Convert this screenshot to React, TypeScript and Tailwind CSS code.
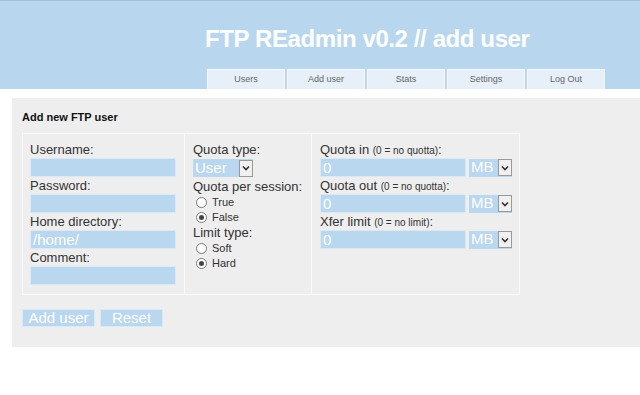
import React from "react";

const tabs = ["Users", "Add user", "Stats", "Settings", "Log Out"];

function Radio({ label, checked }: { label: string; checked?: boolean }) {
  return (
    <div className="flex h-[15px] items-center gap-[5px] pl-[3px] text-[11px] text-[#333]">
      <span className="flex h-[11px] w-[11px] items-center justify-center rounded-full border border-[#777] bg-white">
        {checked && <span className="h-[5px] w-[5px] rounded-full bg-[#444]" />}
      </span>
      {label}
    </div>
  );
}

function Input({ value = "" }: { value?: string }) {
  return (
    <div className="h-[19px] w-[146px] border border-[#dbe9f5] bg-[#b9d7ee] px-[2px] text-[15px] leading-[17px] text-white">
      {value}
    </div>
  );
}

function Select({ value, w }: { value: string; w: string }) {
  return (
    <div className={`${w} flex h-[18px] items-center bg-[#b9d7ee] text-[15px] text-white`}>
      <span className="flex-1 pl-[2px]">{value}</span>
      <span className="flex h-[17px] w-[14px] items-center justify-center border border-[#999] bg-[#f0f0f0]">
        <svg width="8" height="6" viewBox="0 0 8 6">
          <path d="M1 1.5 L4 4.5 L7 1.5" fill="none" stroke="#333" strokeWidth="1.6" />
        </svg>
      </span>
    </div>
  );
}

function Label({ children }: { children: React.ReactNode }) {
  return <div className="h-[16px] text-[13px] leading-[16px] text-[#333]">{children}</div>;
}

function Small({ children }: { children: React.ReactNode }) {
  return <span className="text-[10px]">{children}</span>;
}

function Gap() {
  return <div className="h-[1px]" />;
}

export default function App() {
  return (
    <div className="min-h-[395px] bg-white font-['Liberation_Sans',Arial,sans-serif]">
      <div className="border-t border-[#9fc0da] bg-[#b8d7ee]">
        <div className="h-[68px] pl-[205px] pt-[23px] text-[24px] font-bold leading-[30px] tracking-[-0.4px] text-white">
          FTP REadmin v0.2 // add user
        </div>
        <div className="flex gap-[2px] pl-[207px]">
          {tabs.map((t) => (
            <div
              key={t}
              className="flex h-[20px] w-[78px] items-center justify-center border-x border-t border-[#f4f8fb] bg-[#e7f0f8] text-[9px] text-[#666]"
            >
              {t}
            </div>
          ))}
        </div>
      </div>

      <div className="ml-[12px] mt-[9px] h-[249px] bg-[#eeeeee] pl-[10px] pt-[12px]">
        <div className="text-[11px] font-bold leading-[14px] text-[#111]">Add new FTP user</div>
        <div className="mt-[9px] flex h-[162px] w-[498px] border border-[#fafafa]">
          <div className="w-[162px] border-r border-[#fafafa] pl-[7px] pt-[8px]">
            <Label>Username:</Label>
            <Input />
            <Gap />
            <Label>Password:</Label>
            <Input />
            <Gap />
            <Label>Home directory:</Label>
            <Input value="/home/" />
            <Gap />
            <Label>Comment:</Label>
            <Input />
          </div>
          <div className="w-[127px] border-r border-[#fafafa] pl-[8px] pt-[8px]">
            <Label>Quota type:</Label>
            <div className="pt-[1px]">
              <Select value="User" w="w-[60px]" />
            </div>
            <div className="h-[2px]" />
            <Label>Quota per session:</Label>
            <Radio label="True" />
            <Radio label="False" checked />
            <Label>Limit type:</Label>
            <Radio label="Soft" />
            <Radio label="Hard" checked />
          </div>
          <div className="flex-1 pl-[8px] pt-[8px]">
            <Label>
              Quota in <Small>(0 = no quotta)</Small>:
            </Label>
            <div className="flex items-center gap-[3px]">
              <Input value="0" />
              <Select value="MB" w="w-[43px]" />
            </div>
            <Gap />
            <Label>
              Quota out <Small>(0 = no quotta)</Small>:
            </Label>
            <div className="flex items-center gap-[3px]">
              <Input value="0" />
              <Select value="MB" w="w-[43px]" />
            </div>
            <Gap />
            <Label>
              Xfer limit <Small>(0 = no limit)</Small>:
            </Label>
            <div className="flex items-center gap-[3px]">
              <Input value="0" />
              <Select value="MB" w="w-[43px]" />
            </div>
          </div>
        </div>
        <div className="mt-[14px] flex gap-[5px]">
          <div className="flex h-[18px] w-[73px] items-center justify-center border border-[#dbe9f5] bg-[#b9d7ee] text-[15px] text-white">
            Add user
          </div>
          <div className="flex h-[18px] w-[63px] items-center justify-center border border-[#dbe9f5] bg-[#b9d7ee] text-[15px] text-white">
            Reset
          </div>
        </div>
      </div>
    </div>
  );
}
